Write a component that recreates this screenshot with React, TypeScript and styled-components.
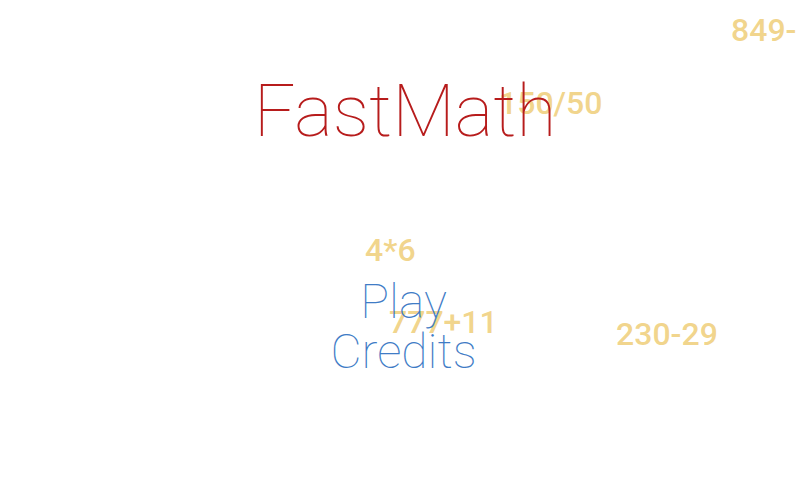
import styled, { createGlobalStyle } from "styled-components";

const GlobalStyle = createGlobalStyle`
	html, body {
		margin: 0;
		padding: 0;
		background: #ffffff;
	}
	body {
		font-family: Roboto, "Liberation Sans", sans-serif;
	}
`;

const problems = [
	{ text: "849-", x: 731, y: 14 },
	{ text: "150/50", x: 499, y: 87 },
	{ text: "4*6", x: 365, y: 234 },
	{ text: "777+11", x: 389, y: 306 },
	{ text: "230-29", x: 616, y: 318 },
];

const App = () => {
	return (
		<>
			<GlobalStyle />
			<Screen>
				<ProblemLayer>
					{problems.map((p, i) => (
						<Problem key={i} style={{ left: p.x, top: p.y }}>
							{p.text}
						</Problem>
					))}
				</ProblemLayer>
				<Content>
					<Title>FastMath</Title>
					<Menu>
						<MenuItem>Play</MenuItem>
						<MenuItem>Credits</MenuItem>
					</Menu>
				</Content>
			</Screen>
		</>
	);
};

export default App;

const Screen = styled.div`
	position: relative;
	width: 800px;
	height: 480px;
	overflow: hidden;
	background: #ffffff;
`;

const ProblemLayer = styled.div`
	position: absolute;
	inset: 0;
	z-index: 0;
`;

const Problem = styled.span`
	position: absolute;
	font-family: Roboto, "Liberation Sans", sans-serif;
	font-weight: 500;
	font-size: 32px;
	line-height: 1;
	color: rgba(238, 202, 110, 0.8);
	white-space: nowrap;
`;

const Content = styled.div`
	position: relative;
	z-index: 1;
	display: flex;
	flex-direction: column;
	align-items: center;
	padding-top: 75px;
`;

const Title = styled.h1`
	margin: 0 0 0 10px;
	font-family: Roboto, "Liberation Sans", sans-serif;
	font-weight: 100;
	font-size: 73px;
	line-height: 1;
	color: #b71c1c;
`;

const Menu = styled.div`
	display: flex;
	flex-direction: column;
	align-items: center;
	margin: 129px 0 0 7px;
`;

const MenuItem = styled.div`
	font-family: Roboto, "Liberation Sans", sans-serif;
	font-weight: 100;
	font-size: 48px;
	line-height: 50px;
	color: #3f7cc6;
	cursor: pointer;
`;
